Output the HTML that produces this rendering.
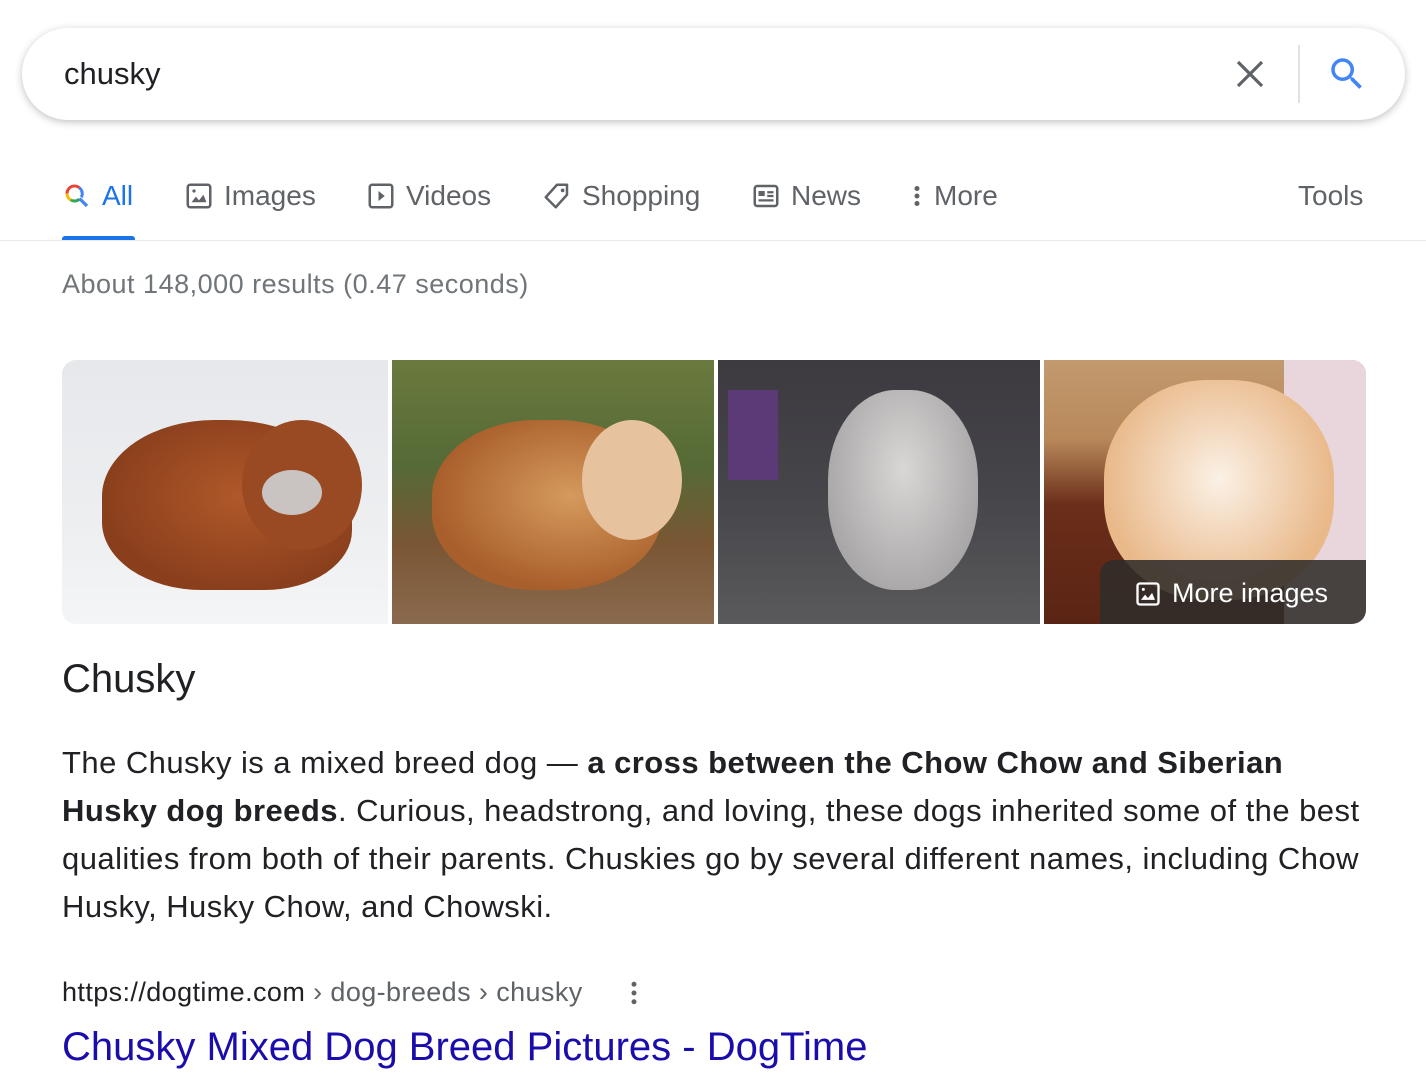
<!DOCTYPE html>
<html><head><meta charset="utf-8"><style>
*{margin:0;padding:0;box-sizing:border-box}
body{width:1426px;height:1092px;overflow:hidden;background:#fff;font-family:"Liberation Sans",Arial,sans-serif;color:#202124;position:relative}
.abs{position:absolute}
.sb{left:22px;top:28px;width:1383px;height:92px;border-radius:46px;box-shadow:0 2px 8px rgba(32,33,36,.28);background:#fff}
.tab{top:180px;font-size:28px;color:#5f6368;display:flex;align-items:center;gap:10px;white-space:nowrap}
.img{top:360px;height:264px;overflow:hidden}
</style></head><body>
<div class="abs sb"></div>
<div class="abs" style="left:64px;top:56px;font-size:31px;color:#202124">chusky</div>
<svg class="abs" style="left:1234px;top:58px" width="32" height="32" viewBox="0 0 32 32"><path d="M4 4L28 28M28 4L4 28" stroke="#5f6368" stroke-width="3.2"/></svg>
<div class="abs" style="left:1298px;top:45px;width:2px;height:58px;background:#dfe1e5"></div>
<svg class="abs" style="left:1326px;top:53px" width="42" height="42" viewBox="0 0 24 24"><path fill="#4285f4" d="M15.5 14h-.79l-.28-.27A6.470 6.470 0 0016 9.5 6.5 6.5 0 109.5 16c1.61 0 3.090-.59 4.230-1.57l.27.28v.79l5 4.990L20.490 19l-4.990-5zm-6 0C7.010 14 5 11.990 5 9.5S7.010 5 9.5 5 14 7.010 14 9.5 11.990 14 9.5 14z"/></svg>

<div class="abs tab" style="left:62px;color:#1a73e8">
<svg width="30" height="30" viewBox="0 0 24 24"><path d="M4 10a6 6 0 0 1 10-4.5" stroke="#ea4335" stroke-width="2.4" fill="none"/><path d="M14 5.5A6 6 0 0 1 15.5 13" stroke="#4285f4" stroke-width="2.4" fill="none"/><path d="M4 10a6 6 0 0 0 3 5.2" stroke="#fbbc05" stroke-width="2.4" fill="none"/><path d="M7 15.2A6 6 0 0 0 14 14.5" stroke="#34a853" stroke-width="2.4" fill="none"/><path d="M14 14l6 6" stroke="#4285f4" stroke-width="2.6"/></svg>All</div>
<div class="abs" style="left:62px;top:236px;width:73px;height:5px;background:#1a73e8;border-radius:3px 3px 0 0"></div>
<div class="abs tab" style="left:184px"><svg width="30" height="30" viewBox="0 0 24 24"><rect x="3" y="3" width="18" height="18" rx="2" fill="none" stroke="#5f6368" stroke-width="2"/><path d="M6 17l3.5-4.5 2.5 3 3.5-4.5L18 17z" fill="#5f6368"/><circle cx="8" cy="8" r="1.3" fill="#5f6368"/></svg>Images</div>
<div class="abs tab" style="left:366px"><svg width="30" height="30" viewBox="0 0 24 24"><rect x="3" y="3" width="18" height="18" rx="2" fill="none" stroke="#5f6368" stroke-width="2"/><path d="M10 8v8l5-4z" fill="#5f6368"/></svg>Videos</div>
<div class="abs tab" style="left:542px"><svg width="30" height="30" viewBox="0 0 24 24"><path d="M12 3h8v8l-9 10-8-8z" fill="none" stroke="#5f6368" stroke-width="2" stroke-linejoin="round"/><circle cx="16.5" cy="7.5" r="1.5" fill="#5f6368"/></svg>Shopping</div>
<div class="abs tab" style="left:751px"><svg width="30" height="30" viewBox="0 0 24 24"><rect x="3" y="4" width="18" height="16" rx="2" fill="none" stroke="#5f6368" stroke-width="2"/><rect x="6" y="8" width="5" height="4" fill="#5f6368"/><path d="M13 9h5M13 12h5M6 15.5h12" stroke="#5f6368" stroke-width="1.8"/></svg>News</div>
<div class="abs tab" style="left:906px;gap:6px"><svg width="22" height="30" viewBox="0 0 10 24"><circle cx="5" cy="6" r="2" fill="#5f6368"/><circle cx="5" cy="12" r="2" fill="#5f6368"/><circle cx="5" cy="18" r="2" fill="#5f6368"/></svg>More</div>
<div class="abs tab" style="left:1298px">Tools</div>
<div class="abs" style="left:0;top:240px;width:1426px;height:1px;background:#e8eaed"></div>

<div class="abs" style="left:62px;top:269px;font-size:27px;color:#70757a;letter-spacing:0.5px">About 148,000 results (0.47 seconds)</div>

<div class="abs img" style="left:62px;width:326px;border-radius:14px 0 0 14px;background:linear-gradient(180deg,#e6e8ec 0%,#eceef0 60%,#f4f5f7 100%)">
<div class="abs" style="left:40px;top:60px;width:250px;height:170px;border-radius:45% 50% 35% 40%;background:radial-gradient(ellipse at 55% 45%,#b0582a,#8a3f1c 70%)"></div>
<div class="abs" style="left:180px;top:60px;width:120px;height:130px;border-radius:50%;background:#9a4a22"></div>
<div class="abs" style="left:200px;top:110px;width:60px;height:45px;border-radius:50%;background:#c9c4c2"></div>
</div>
<div class="abs img" style="left:392px;width:322px;background:linear-gradient(180deg,#6b7a3e 0%,#556a36 40%,#7a5634 70%,#8a6a4e 100%)">
<div class="abs" style="left:40px;top:60px;width:230px;height:170px;border-radius:45%;background:radial-gradient(ellipse at 60% 45%,#d59a5d,#a95f2b 70%)"></div>
<div class="abs" style="left:190px;top:60px;width:100px;height:120px;border-radius:50%;background:#e7c29e"></div>
</div>
<div class="abs img" style="left:718px;width:322px;background:linear-gradient(180deg,#3d3a40 0%,#45454a 50%,#5a5a5c 100%)">
<div class="abs" style="left:110px;top:30px;width:150px;height:200px;border-radius:45%;background:radial-gradient(ellipse at 50% 40%,#d9d7d6,#a8a6a6 75%)"></div>
<div class="abs" style="left:10px;top:30px;width:50px;height:90px;background:#5c3a78"></div>
</div>
<div class="abs img" style="left:1044px;width:322px;border-radius:0 14px 14px 0;background:linear-gradient(180deg,#c29a6e 0%,#b8885a 30%,#6b2e1a 55%,#5a2414 100%)">
<div class="abs" style="left:240px;top:0;width:82px;height:264px;background:#e8d6dc"></div>
<div class="abs" style="left:60px;top:20px;width:230px;height:220px;border-radius:45%;background:radial-gradient(ellipse at 50% 45%,#fbf1e6,#e9b98a 70%)"></div>
<div class="abs" style="left:56px;top:200px;width:266px;height:64px;border-radius:14px 0 14px 0;background:rgba(48,44,42,.88)"></div>
<div class="abs" style="left:90px;top:218px;color:#fff;font-size:27px;display:flex;align-items:center;gap:10px"><svg width="28" height="28" viewBox="0 0 24 24"><rect x="3" y="3" width="18" height="18" rx="2" fill="none" stroke="#fff" stroke-width="2"/><path d="M6 17l3.5-4.5 2.5 3 3.5-4.5L18 17z" fill="#fff"/><circle cx="8" cy="8" r="1.3" fill="#fff"/></svg>More images</div>
</div>

<div class="abs" style="left:62px;top:657px;font-size:40px">Chusky</div>
<div class="abs" style="left:62px;top:739px;width:1310px;font-size:31px;line-height:48px;letter-spacing:0.45px">The Chusky is a mixed breed dog — <b>a cross between the Chow Chow and Siberian Husky dog breeds</b>. Curious, headstrong, and loving, these dogs inherited some of the best qualities from both of their parents. Chuskies go by several different names, including Chow Husky, Husky Chow, and Chowski.</div>

<div class="abs" style="left:62px;top:977px;font-size:27px;color:#202124;letter-spacing:0.4px">https://dogtime.com <span style="color:#5f6368">› dog-breeds › chusky</span></div>
<svg class="abs" style="left:624px;top:978px" width="20" height="30" viewBox="0 0 10 24"><circle cx="5" cy="5" r="2" fill="#5f6368"/><circle cx="5" cy="12" r="2" fill="#5f6368"/><circle cx="5" cy="19" r="2" fill="#5f6368"/></svg>
<div class="abs" style="left:62px;top:1025px;font-size:40px;color:#1a0dab">Chusky Mixed Dog Breed Pictures - DogTime</div>
</body></html>
